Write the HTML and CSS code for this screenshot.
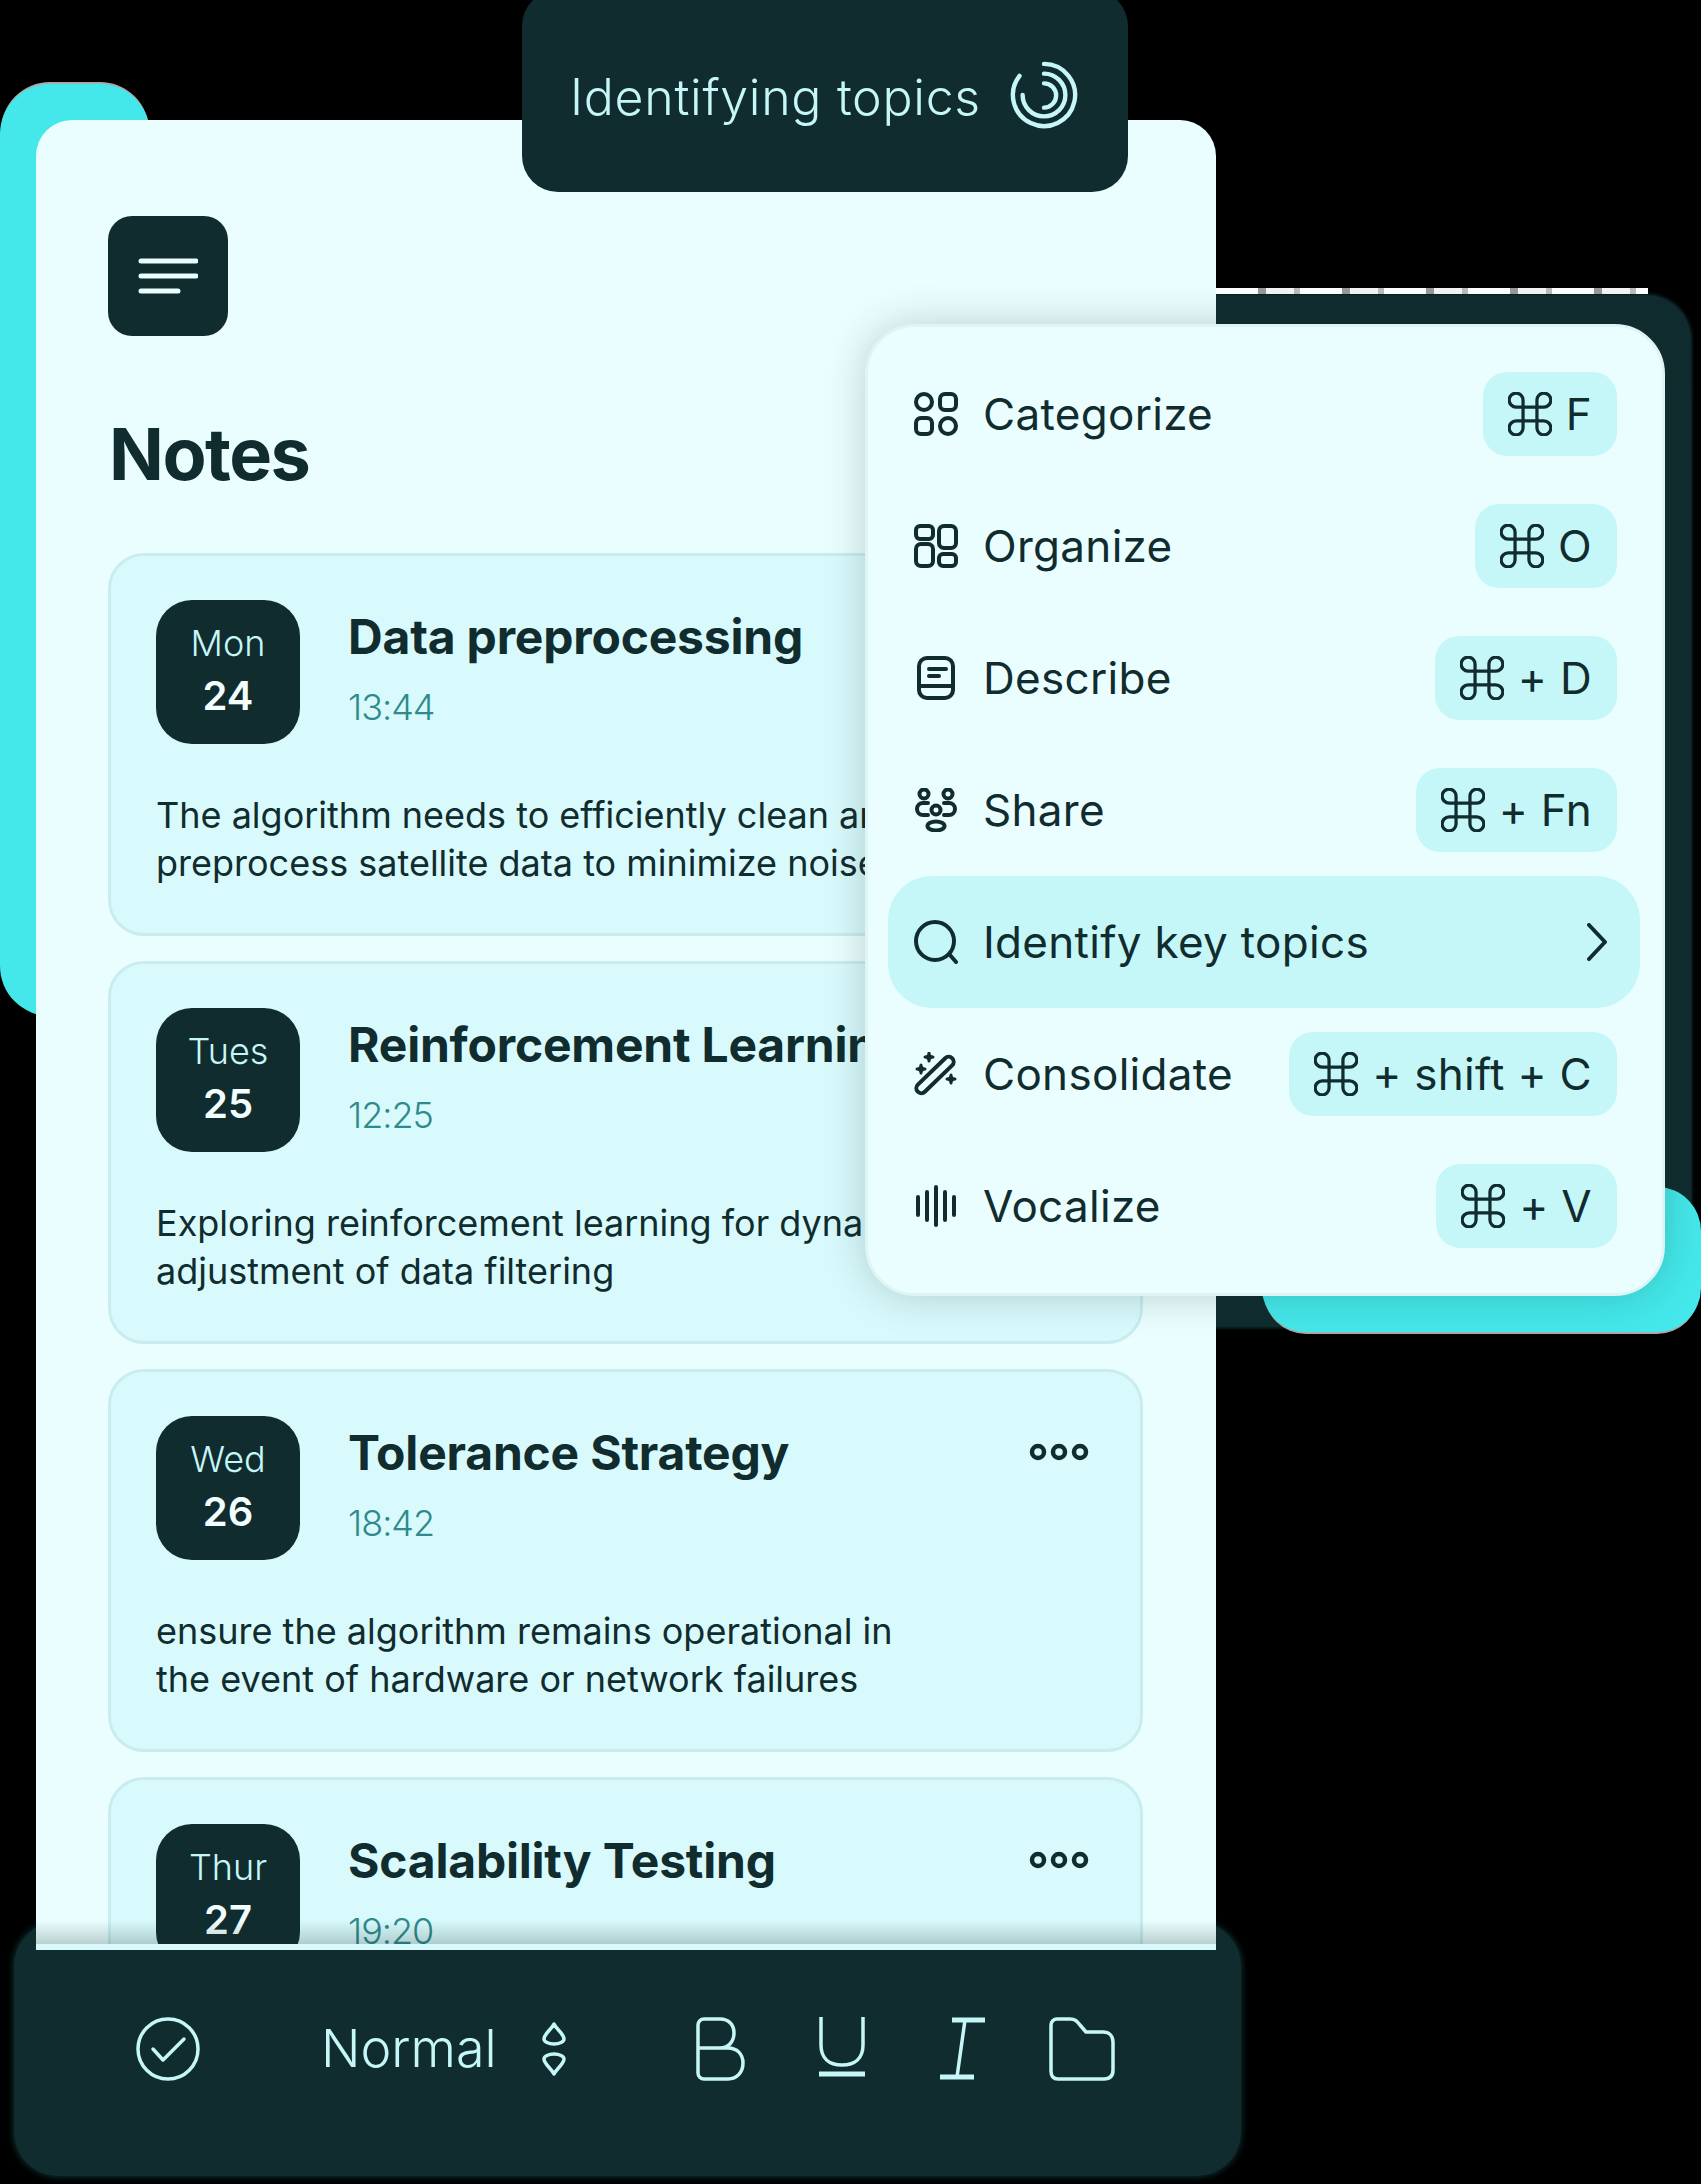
FILE: index.html
```html
<!DOCTYPE html>
<html lang="en">
<head>
<meta charset="utf-8">
<title>Notes</title>
<link rel="stylesheet" href="styles.css">
</head>
<body>
<div class="stage">
  <div class="glow-left"></div>
  <div class="dark-back"></div>
  <div class="glow-right"></div>

  <div class="toolbar">
    <svg class="t-check" viewBox="0 0 64 64"><circle cx="32" cy="32" r="30"/><path d="M17 32l10 11 21-21"/></svg>
    <span class="t-label">Normal</span>
    <svg class="t-updown" viewBox="0 0 26 54"><path d="M13 2C10 8 3 12 3 17a10 5 0 0 0 20 0C23 12 16 8 13 2Z"/><path d="M13 52C10 46 3 42 3 37a10 5 0 0 1 20 0C23 42 16 46 13 52Z"/></svg>
    <svg class="t-bold" viewBox="0 0 50 64"><path d="M2 8a6 6 0 0 1 6-6h16c9 0 14 6 14 14s-5 15-14 15H2ZM24 31h8c9 0 15 6 15 15s-6 16-15 16H8a6 6 0 0 1-6-6V31"/></svg>
    <svg class="t-under" viewBox="0 0 46 64"><path d="M2 0v28c0 13 8 20 21 20s21-7 21-20V0"/><path class="t-thick" d="M0 57h46"/></svg>
    <svg class="t-ital" viewBox="0 0 46 64"><path class="t-thick" d="M13 3h33M1 60h34"/><path d="M26 3L18 60"/></svg>
    <svg class="t-folder" viewBox="0 0 66 64"><path d="M2 8a6 6 0 0 1 6-6h13c5 0 7 2 10 6l6 7h17c6 0 10 4 10 10v28c0 6-3 9-9 9H9c-5 0-7-3-7-8Z"/></svg>
  </div>

  <main class="notes">
    <button class="menu-btn" aria-label="Menu">
      <svg viewBox="0 0 60 36"><path d="M3 3h55M3 18h55M3 33h37"/></svg>
    </button>
    <h1 class="notes-title">Notes</h1>
    <div class="note-list">
      <article class="note">
        <header class="note-head">
          <div class="date"><span class="date-day">Mon</span><span class="date-num">24</span></div>
          <div class="note-info"><h2 class="note-title">Data preprocessing</h2><time class="note-time">13:44</time></div>
          <svg class="dots" viewBox="0 0 60 20"><circle cx="9" cy="10" r="6"/><circle cx="30" cy="10" r="6"/><circle cx="51" cy="10" r="6"/></svg>
        </header>
        <p class="note-text">The algorithm needs to efficiently clean and<br>preprocess satellite data to minimize noise</p>
      </article>
      <article class="note">
        <header class="note-head">
          <div class="date"><span class="date-day">Tues</span><span class="date-num">25</span></div>
          <div class="note-info"><h2 class="note-title">Reinforcement Learning</h2><time class="note-time">12:25</time></div>
          <svg class="dots" viewBox="0 0 60 20"><circle cx="9" cy="10" r="6"/><circle cx="30" cy="10" r="6"/><circle cx="51" cy="10" r="6"/></svg>
        </header>
        <p class="note-text">Exploring reinforcement learning for dynamic<br>adjustment of data filtering</p>
      </article>
      <article class="note">
        <header class="note-head">
          <div class="date"><span class="date-day">Wed</span><span class="date-num">26</span></div>
          <div class="note-info"><h2 class="note-title">Tolerance Strategy</h2><time class="note-time">18:42</time></div>
          <svg class="dots" viewBox="0 0 60 20"><circle cx="9" cy="10" r="6"/><circle cx="30" cy="10" r="6"/><circle cx="51" cy="10" r="6"/></svg>
        </header>
        <p class="note-text">ensure the algorithm remains operational in<br>the event of hardware or network failures</p>
      </article>
      <article class="note">
        <header class="note-head">
          <div class="date"><span class="date-day">Thur</span><span class="date-num">27</span></div>
          <div class="note-info"><h2 class="note-title">Scalability Testing</h2><time class="note-time">19:20</time></div>
          <svg class="dots" viewBox="0 0 60 20"><circle cx="9" cy="10" r="6"/><circle cx="30" cy="10" r="6"/><circle cx="51" cy="10" r="6"/></svg>
        </header>
      </article>
    </div>
    <div class="notes-fade"></div>
  </main>

  <div class="status-pill">
    <span class="status-text">Identifying topics</span>
    <svg class="spinner" viewBox="0 0 70 70"><path d="M35 3a32 32 0 1 1-25.200 12.300"/><path d="M35 13a22 22 0 1 1-22 22"/><path d="M35 23a12.500 12.500 0 0 1 0 25"/></svg>
  </div>

  <nav class="menu">
    <div class="row">
      <svg class="row-icon" viewBox="0 0 44 44"><circle cx="10" cy="10" r="8"/><rect x="26" y="2" width="16" height="16" rx="5"/><rect x="2" y="26" width="16" height="16" rx="5"/><circle cx="34" cy="34" r="8"/></svg>
      <span class="row-label">Categorize</span>
      <span class="chip"><svg class="cmd" viewBox="2.500 2.500 19 19"><path d="M15 6v12a3 3 0 1 0 3-3H6a3 3 0 1 0 3 3V6a3 3 0 1 0-3 3h12a3 3 0 1 0-3-3"/></svg>F</span>
    </div>
    <div class="row">
      <svg class="row-icon" viewBox="0 0 44 44"><rect x="2" y="2" width="17" height="13" rx="4"/><rect x="25" y="2" width="17" height="22" rx="5"/><rect x="2" y="20" width="17" height="22" rx="5"/><rect x="25" y="30" width="17" height="12" rx="4"/></svg>
      <span class="row-label">Organize</span>
      <span class="chip"><svg class="cmd" viewBox="2.500 2.500 19 19"><path d="M15 6v12a3 3 0 1 0 3-3H6a3 3 0 1 0 3 3V6a3 3 0 1 0-3 3h12a3 3 0 1 0-3-3"/></svg>O</span>
    </div>
    <div class="row">
      <svg class="row-icon" viewBox="0 0 44 44"><rect x="5" y="2" width="34" height="40" rx="8"/><path d="M5 30h34M15 13h17M15 20h10"/></svg>
      <span class="row-label">Describe</span>
      <span class="chip"><svg class="cmd" viewBox="2.500 2.500 19 19"><path d="M15 6v12a3 3 0 1 0 3-3H6a3 3 0 1 0 3 3V6a3 3 0 1 0-3 3h12a3 3 0 1 0-3-3"/></svg>+ D</span>
    </div>
    <div class="row">
      <svg class="row-icon" viewBox="0 0 44 44"><circle cx="10" cy="6" r="4.500"/><circle cx="34" cy="6" r="4.500"/><circle cx="22" cy="22" r="4.500"/><ellipse cx="22" cy="38" rx="8.500" ry="4.500"/><path d="M14 15H9a6 6 0 0 0 0 12h5M30 15h5a6 6 0 0 1 0 12h-5"/></svg>
      <span class="row-label">Share</span>
      <span class="chip"><svg class="cmd" viewBox="2.500 2.500 19 19"><path d="M15 6v12a3 3 0 1 0 3-3H6a3 3 0 1 0 3 3V6a3 3 0 1 0-3 3h12a3 3 0 1 0-3-3"/></svg>+ Fn</span>
    </div>
    <div class="row row-active">
      <svg class="row-icon" viewBox="0 0 44 44"><circle cx="21" cy="21" r="19"/><path d="M36 35l6 7"/></svg>
      <span class="row-label">Identify key topics</span>
      <svg class="chevron" viewBox="0 0 20 38"><path d="M2 2l16 17L2 36"/></svg>
    </div>
    <div class="row">
      <svg class="row-icon" viewBox="0 0 44 44"><rect x="-3" y="18" width="48" height="10" rx="5" transform="rotate(-44 21 23)"/><path class="thin-line" d="M15 1q0 4 4 4q-4 0-4 4q0-4-4-4q4 0 4-4ZM7 13q0 4 4 4q-4 0-4 4q0-4-4-4q4 0 4-4ZM37 23q0 4 4 4q-4 0-4 4q0-4-4-4q4 0 4-4Z"/></svg>
      <span class="row-label">Consolidate</span>
      <span class="chip"><svg class="cmd" viewBox="2.500 2.500 19 19"><path d="M15 6v12a3 3 0 1 0 3-3H6a3 3 0 1 0 3 3V6a3 3 0 1 0-3 3h12a3 3 0 1 0-3-3"/></svg>+ shift + C</span>
    </div>
    <div class="row">
      <svg class="row-icon" viewBox="0 0 44 44"><path d="M4 13v18M13 8v28M22 3v38M31 8v28M40 13v18"/></svg>
      <span class="row-label">Vocalize</span>
      <span class="chip"><svg class="cmd" viewBox="2.500 2.500 19 19"><path d="M15 6v12a3 3 0 1 0 3-3H6a3 3 0 1 0 3 3V6a3 3 0 1 0-3 3h12a3 3 0 1 0-3-3"/></svg>+ V</span>
    </div>
  </nav>
</div>
</body>
</html>
```

FILE: styles.css
```css
* { box-sizing: border-box; }
html, body { margin: 0; padding: 0; background: #000; }
body { font-family: Inter, "Noto Sans", "Liberation Sans", sans-serif; color: #112C2E; }
svg { display: block; fill: none; stroke: currentColor; stroke-linecap: round; stroke-linejoin: round; flex: none; }
h1, h2, p { margin: 0; }

.stage { position: relative; width: 1701px; height: 2184px; overflow: hidden; background: #000; }

/* free-composed layers */
.glow-left { position: absolute; left: 0; top: 84px; width: 150px; height: 932px; border-radius: 50px; background: #44E8EA; box-shadow: 0 -3px 0 -1px #aaa; }
.dark-back { position: absolute; left: 1100px; top: 296px; width: 590px; height: 1030px; border-radius: 44px; background: #112C2E; box-shadow: 0 0 4px 1px #1b4a4d; }
.dark-back::before { content: ""; position: absolute; left: 116px; right: 42px; top: -8px; height: 6px; background: repeating-linear-gradient(to right, #fff 0 42px, #999 42px 50px, #f4f4f4 50px 78px, #bbb 78px 84px); }
.glow-right { position: absolute; left: 1262px; top: 1187px; width: 439px; height: 145px; border-radius: 44px; background: #44E8EA; box-shadow: 0 4px 0 -2px #aaa; }

.notes { position: absolute; left: 36px; top: 120px; width: 1180px; height: 1830px; z-index: 2; padding: 96px 73px 0 72px; background: #EBFEFF; border-radius: 36px 36px 0 0; overflow: hidden; }
.menu-btn { display: flex; align-items: center; justify-content: center; width: 120px; height: 120px; padding: 0; border: 0; border-radius: 24px; background: #112C2E; color: #EBFEFF; }
.menu-btn svg { width: 60px; height: 36px; stroke-width: 5; }
.notes-title { margin: 68px 0 49px 1px; font-size: 72px; line-height: 100px; font-weight: 700; letter-spacing: -1.5px; }

.note-list { display: flex; flex-direction: column; gap: 25px; }
.note { flex: none; height: 383px; padding: 44px 45px; background: #D9FAFC; border: 3px solid #C9EDEE; border-radius: 36px; }
.note-head { display: flex; align-items: flex-start; }
.date { display: flex; flex-direction: column; align-items: center; justify-content: center; flex: none; width: 144px; height: 144px; padding-bottom: 3px; border-radius: 36px; background: #112C2E; }
.date-day { font-size: 36px; line-height: 50px; font-weight: 300; color: #C6F7F8; }
.date-num { font-size: 40px; line-height: 56px; font-weight: 600; color: #F3FEFE; }
.note-info { display: flex; flex-direction: column; margin-left: 48px; padding-top: 7px; }
.note-title { font-size: 48px; line-height: 60px; font-weight: 700; letter-spacing: -.2px; white-space: nowrap; }
.note-time { margin-top: 19px; font-size: 36px; line-height: 42px; font-weight: 300; letter-spacing: -1px; color: #2E8A8C; }
.dots { width: 60px; height: 20px; margin: 26px 6px 0 auto; stroke-width: 4.500; }
.note-text { margin-top: 47px; font-size: 36px; line-height: 48px; font-weight: 400; white-space: nowrap; }

.notes-fade { position: absolute; left: 0; right: 0; bottom: 0; height: 30px; border-bottom: 6px solid #D9FAFC; background: linear-gradient(to bottom, rgba(17,44,46,0), rgba(17,44,46,.22)); }

.status-pill { position: absolute; left: 522px; top: -10px; width: 606px; height: 202px; z-index: 3; display: flex; align-items: center; padding: 12px 0 0 48px; background: #112C2E; border-radius: 36px; color: #C6F7F8; }
.status-text { font-size: 50px; font-weight: 300; line-height: 70px; letter-spacing: .7px; white-space: nowrap; }
.spinner { position: absolute; left: 488px; top: 71px; width: 68px; height: 68px; stroke-width: 4.500; }

.menu { position: absolute; left: 865px; top: 324px; width: 800px; height: 972px; z-index: 4; padding: 21px 22px 21px 20px; background: #EBFEFF; border: 3px solid #DFF4F5; border-radius: 50px; box-shadow: 0 0 40px rgba(17,44,46,.22); }
.row { display: flex; align-items: center; height: 132px; padding: 0 23px 0 26px; border-radius: 44px; }
.row-active { background: #C6F7F8; }
.row-icon { width: 44px; height: 44px; stroke-width: 4; }
.thin-line { stroke-width: 3; }
.row-label { margin-left: 25px; font-size: 44px; line-height: 60px; font-weight: 400; letter-spacing: .3px; white-space: nowrap; }
.chip { display: flex; align-items: center; gap: 14px; height: 84px; margin-left: auto; padding: 0 25px; border-radius: 24px; background: #C6F7F8; font-size: 44px; font-weight: 400; letter-spacing: .3px; white-space: nowrap; }
.cmd { width: 44px; height: 44px; stroke-width: 1.400; }
.chevron { width: 20px; height: 38px; margin: 0 10px 0 auto; stroke-width: 4; }

.toolbar { position: absolute; left: 14px; top: 1922px; width: 1227px; height: 254px; z-index: 1; display: flex; align-items: center; padding: 0 0 0 122px; background: #112C2E; border-radius: 44px; box-shadow: 0 0 6px 1px rgba(18,60,62,.8); color: #C6F7F8; }
.toolbar svg { stroke-width: 3.500; }
.t-check { width: 64px; height: 64px; }
.t-label { margin: 0 44px 0 121px; font-size: 52px; line-height: 60px; font-weight: 300; white-space: nowrap; }
.t-updown { width: 26px; height: 54px; }
.t-bold { width: 50px; height: 64px; margin-left: 129px; }
.t-under { width: 46px; height: 64px; margin-left: 73px; }
.t-ital { width: 46px; height: 64px; margin-left: 74px; }
.t-folder { width: 66px; height: 64px; margin-left: 64px; }
.toolbar svg .t-thick { stroke-width: 5; stroke-linecap: butt; }
```
